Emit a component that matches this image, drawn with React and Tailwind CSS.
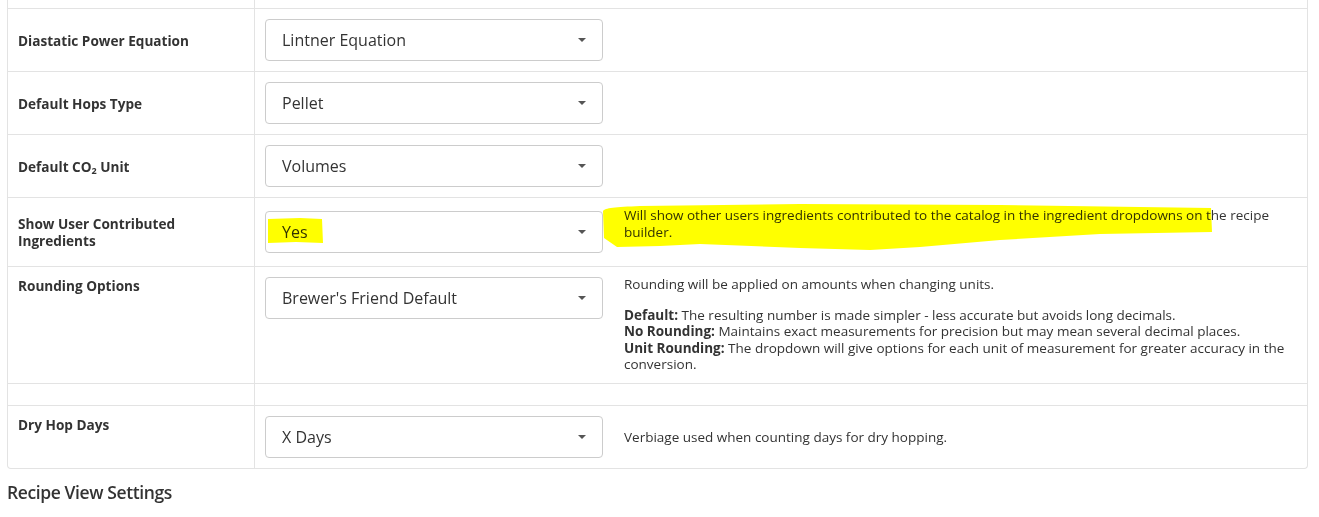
import React from 'react'

const font = { fontFamily: '"Open Sans", "Liberation Sans", sans-serif' }

// Select box with the bootstrap-style caret
const Select = ({ value }) => (
  <div className="flex h-[42px] w-[338px] shrink-0 items-center rounded-[4px] border border-[#ccc] bg-white pl-[16px] text-[16px] text-[#333]">
    <span>{value}</span>
    <span className="ml-auto mr-[16px] h-0 w-0 border-x-[4px] border-t-[4px] border-x-transparent border-t-[#555]" />
  </div>
)

// One settings row: label cell + control cell
const Row = ({ h, label, labelTop, select, desc, descMiddle, controlMiddle = true }) => (
  <div className={`flex border-t border-[#e3e3e3] ${h}`}>
    <div
      className={`flex w-[247px] shrink-0 border-r border-[#e3e3e3] px-[10px] text-[13.6px] font-bold leading-[17px] text-[#333] ${
        labelTop ? 'items-start pt-[10px]' : 'items-center'
      }`}
    >
      <div>{label}</div>
    </div>
    <div className={`flex flex-1 gap-[21px] pl-[10px] pr-[10px] ${controlMiddle ? 'items-center' : 'items-start pt-[10px]'}`}>
      {select && <Select value={select} />}
      {desc && (
        <div className={`text-[13.5px] leading-[16.5px] text-[#333] ${descMiddle ? 'self-center' : 'self-start pt-[9px]'}`}>
          {desc}
        </div>
      )}
    </div>
  </div>
)

export default function App() {
  return (
    <div className="relative h-[517px] w-[1319px] overflow-hidden bg-white" style={font}>
      <div className="ml-[7px] w-[1301px] rounded-b-[4px] border-x border-b border-[#e3e3e3]">
        {/* partial row cut off at the top */}
        <div className="flex h-[8px]">
          <div className="w-[247px] border-r border-[#e3e3e3]" />
        </div>

        <Row h="h-[63px]" label="Diastatic Power Equation" select="Lintner Equation" />
        <Row h="h-[63px]" label="Default Hops Type" select="Pellet" />
        <Row
          h="h-[63px]"
          label={
            <>
              Default CO<sub className="text-[9px]">2</sub> Unit
            </>
          }
          select="Volumes"
        />
        <Row
          h="h-[69px]"
          label="Show User Contributed Ingredients"
          select="Yes"
          desc="Will show other users ingredients contributed to the catalog in the ingredient dropdowns on the recipe builder."
        />
        <Row
          h="h-[117px]"
          label="Rounding Options"
          labelTop
          controlMiddle={false}
          select="Brewer's Friend Default"
          desc={
            <>
              <p className="-mt-[10px] mb-[14px]">Rounding will be applied on amounts when changing units.</p>
              <p>
                <b>Default:</b> The resulting number is made simpler - less accurate but avoids long decimals.
                <br />
                <b>No Rounding:</b> Maintains exact measurements for precision but may mean several decimal places.
                <br />
                <b>Unit Rounding:</b> The dropdown will give options for each unit of measurement for greater accuracy in the
                conversion.
              </p>
            </>
          }
        />
        <Row h="h-[22px]" label="" />
        <Row
          h="h-[63px]"
          label="Dry Hop Days"
          labelTop
          select="X Days"
          desc="Verbiage used when counting days for dry hopping."
          descMiddle
        />
      </div>

      <h3 className="ml-[7px] mt-[10px] text-[17.5px] font-semibold tracking-[-0.4px] text-[#333]">Recipe View Settings</h3>

      {/* yellow marker highlight drawn over the page */}
      <svg className="pointer-events-none absolute left-0 top-0 mix-blend-multiply" width="1319" height="517">
        <path d="M268 219 L300 218 L322 219 L323 243 L296 242 L268 243 Z" fill="#ffff00" />
        <path
          d="M603 211 C605 208 615 207 640 206 L800 204 L1000 205 L1211 208 L1212 232 L1100 234 L1000 240 L920 247 L870 250 L800 248 L700 244 L660 246 L617 247 L604 238 Z"
          fill="#ffff00"
        />
      </svg>
    </div>
  )
}
